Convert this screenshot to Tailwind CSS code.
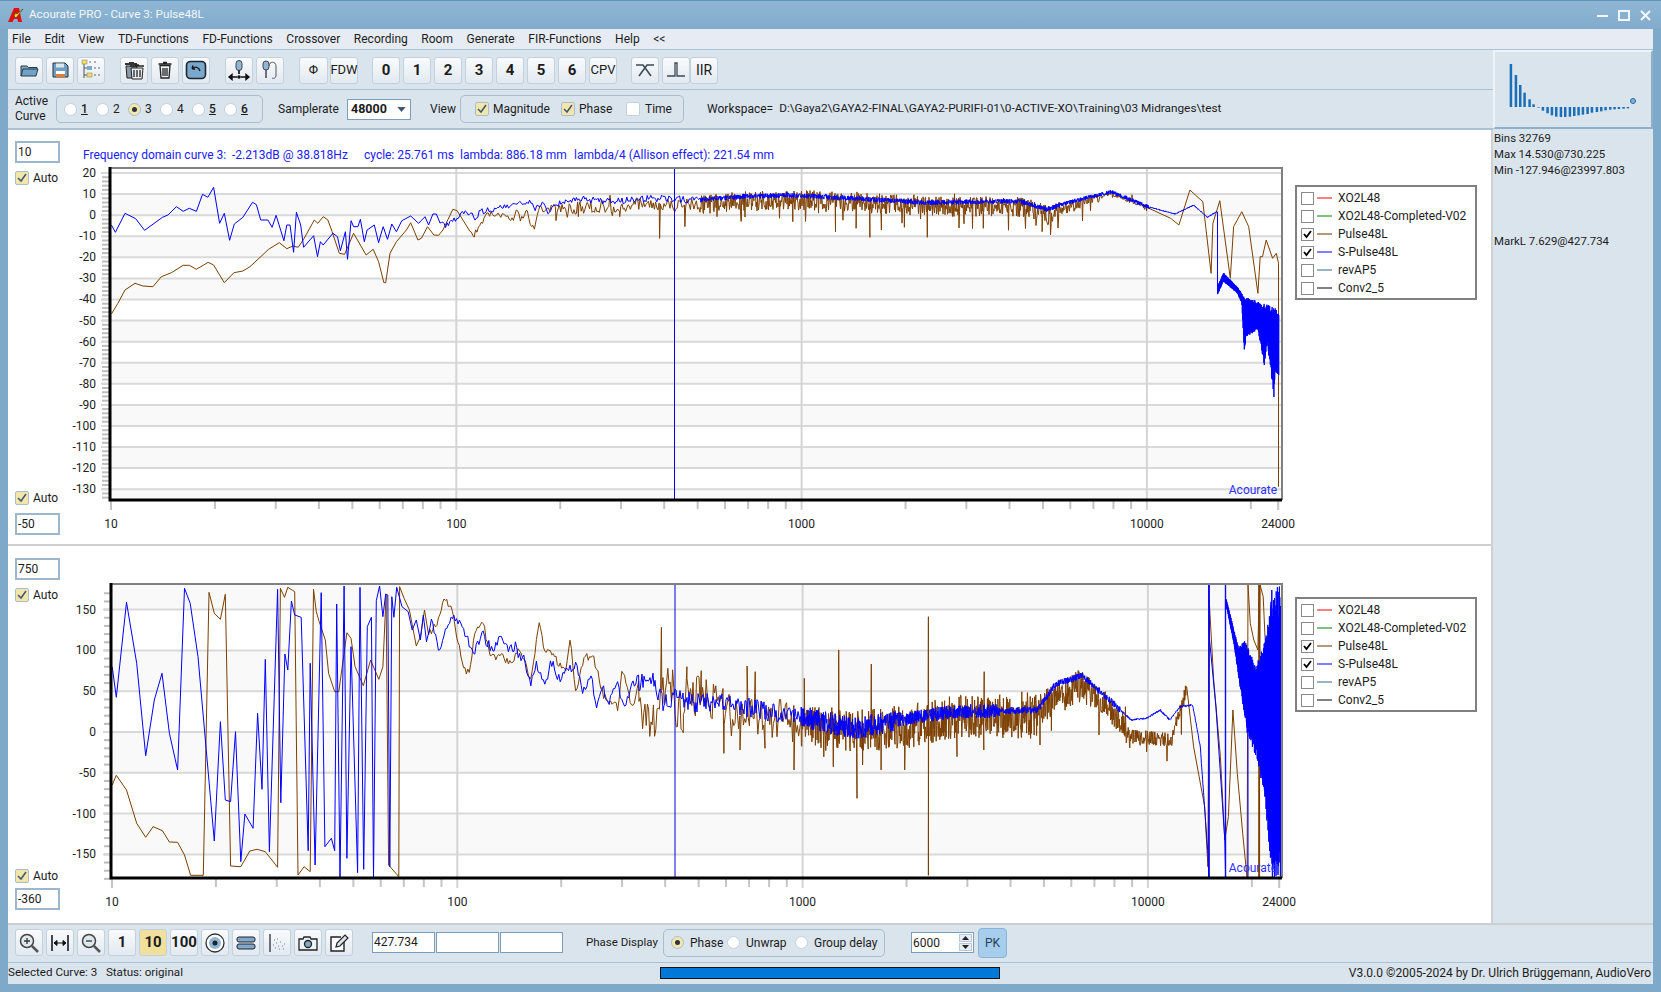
<!DOCTYPE html>
<html lang="en">
<head>
<meta charset="UTF-8">
<title>Acourate PRO - Curve 3: Pulse48L</title>
<script src="https://cdn.jsdelivr.net/npm/@tailwindcss/browser@4"></script>
</head>
<body class="bg-[#7fa9c9]">
<div class="w-[1661px] h-[992px] overflow-hidden flex flex-col bg-[#7fa9c9] font-['Roboto',sans-serif] text-[12px] text-[#1c1c1c] border-t border-[#5f94bc]">

  <!-- title bar -->
  <div class="h-[28px] shrink-0 flex items-center pl-[8px] pr-[10px] bg-linear-to-b from-[#8fb7d4] to-[#82abcd] text-white">
    <svg width="18" height="16" viewBox="0 0 18 16"><path d="M0 15L6 1h5l3 14h-4l-.5-3H6l-1.500 3z" fill="#e01010"/><path d="M6 9l2 2 7-9-6 5-1.500-1z" fill="#f4e21a" stroke="#222" stroke-width=".5"/></svg>
    <span class="ml-[3px] text-[11.7px] text-[#f2f6fa]">Acourate PRO - Curve 3: Pulse48L</span>
    <div class="ml-auto flex items-center gap-[10px]">
      <svg width="11" height="11" viewBox="0 0 11 11"><rect x="0" y="5" width="11" height="2" fill="#f4f7fa"/></svg>
      <svg width="12" height="11" viewBox="0 0 12 11"><rect x="1" y="1" width="10" height="9" fill="none" stroke="#f4f7fa" stroke-width="2"/></svg>
      <svg width="11" height="11" viewBox="0 0 11 11"><path d="M1 1l9 9M10 1l-9 9" stroke="#f4f7fa" stroke-width="2"/></svg>
    </div>
  </div>

  <div class="flex-1 min-h-0 mx-[8px] mb-[8px] flex flex-col">
    <!-- menu -->
    <div class="h-[21px] shrink-0 bg-[#e7ecf4] flex items-center pl-[4px] gap-[13.6px] border-b border-[#a9c2d6]">
      <span>File</span><span>Edit</span><span>View</span><span>TD-Functions</span><span>FD-Functions</span><span>Crossover</span><span>Recording</span><span>Room</span><span>Generate</span><span>FIR-Functions</span><span>Help</span><span>&lt;&lt;</span>
    </div>

    <div class="flex-1 min-h-0 flex">
      <div class="w-[1485px] shrink-0 flex flex-col">
        <!-- toolbar -->
        <div class="h-[40px] shrink-0 bg-[#dae4ed] border-b border-[#a9c2d6] flex items-center pl-[7px] pt-[1px]">
          <div class="flex gap-[3px]">
            <div class="w-[28px] h-[27px] rounded-[3px] border border-[#c3d1de] bg-linear-to-b from-[#f9fbfc] to-[#e2e9f0] flex items-center justify-center">
              <svg width="20" height="20" viewBox="0 0 20 20"><path d="M2 16V6h6l1.500 1.500H18V9" fill="#7fa9c9" stroke="#2b3a45"/><path d="M2 16l2-7h15l-2 7z" fill="#6fa3c9" stroke="#2b3a45"/></svg>
            </div>
            <div class="w-[28px] h-[27px] rounded-[3px] border border-[#c3d1de] bg-linear-to-b from-[#f9fbfc] to-[#e2e9f0] flex items-center justify-center">
              <svg width="20" height="20" viewBox="0 0 20 20"><path d="M3 3h12l3 3v11H3z" fill="#6f9fc3" stroke="#24323c"/><rect x="6" y="3.500" width="8" height="4" fill="#dbe6ee"/><rect x="6" y="11" width="9" height="6" fill="#fff"/><rect x="6" y="14" width="9" height="3" fill="#e87a2c"/></svg>
            </div>
            <div class="w-[28px] h-[27px] rounded-[3px] border border-[#c3d1de] bg-linear-to-b from-[#f9fbfc] to-[#e2e9f0] flex items-center justify-center">
              <svg width="22" height="22" viewBox="0 0 22 22"><path d="M4 3v16M4 9h4M4 16h4" stroke="#555"/><rect x="2" y="1" width="5" height="4" fill="#f3e05a" stroke="#777" stroke-width=".5"/><rect x="7" y="7" width="5" height="4" fill="#7fa9c9"/><rect x="7" y="14" width="5" height="4" fill="#f3e05a" stroke="#777" stroke-width=".5"/><path d="M9 3h3M14 3h3M14 9h3M18 9h2M14 16h3M18 16h2" stroke="#666" stroke-dasharray="2 1"/></svg>
            </div>
          </div>
          <div class="flex gap-[3px] ml-[15px]">
            <div class="w-[28px] h-[27px] rounded-[3px] border border-[#c3d1de] bg-linear-to-b from-[#f9fbfc] to-[#e2e9f0] flex items-center justify-center">
              <svg width="22" height="22" viewBox="0 0 22 22"><path d="M3 7h11l-1 12H4z" fill="#8a9aa6" stroke="#222"/><path d="M2 5h12M6 4h5" stroke="#333" stroke-width="2"/><path d="M8 9h12l-1 11H9z" fill="#e8edf2" stroke="#222"/><path d="M7 7h14M12 6h4M11 11v7M14 11v7M17 11v7" stroke="#222" stroke-width="1.300"/></svg>
            </div>
            <div class="w-[28px] h-[27px] rounded-[3px] border border-[#c3d1de] bg-linear-to-b from-[#f9fbfc] to-[#e2e9f0] flex items-center justify-center">
              <svg width="20" height="20" viewBox="0 0 20 20"><path d="M5 5.500h10l-1 12.500H6z" fill="#eef2f5" stroke="#222" stroke-width="1.300"/><path d="M3.500 4h13M8 2.500h4M8 8v8M10 8v8M12 8v8" stroke="#222" stroke-width="1.300"/></svg>
            </div>
            <div class="w-[28px] h-[27px] rounded-[3px] border border-[#c3d1de] bg-linear-to-b from-[#f9fbfc] to-[#e2e9f0] flex items-center justify-center">
              <svg width="22" height="22" viewBox="0 0 22 22"><rect x="1.500" y="2.500" width="19" height="17" rx="4" fill="#79a8cc" stroke="#1b2730" stroke-width="1.600"/><path d="M7 9.500c3-2.500 7-1.500 8 2.500M7 9.500l1 -3M7 9.500l3 .8" fill="none" stroke="#11181d" stroke-width="1.400"/></svg>
            </div>
          </div>
          <div class="flex gap-[3px] ml-[15px]">
            <div class="w-[28px] h-[27px] rounded-[3px] border border-[#c3d1de] bg-linear-to-b from-[#f9fbfc] to-[#e2e9f0] flex items-center justify-center">
              <svg width="24" height="22" viewBox="0 0 24 22"><rect x="9" y="1.500" width="6" height="10" rx="3" fill="#8fb6d3" stroke="#445"/><path d="M12 11v4" stroke="#333" stroke-width="2"/><path d="M2 18h8M14 18h8M2 18l3-2.500v5zM22 18l-3-2.500v5z" fill="#111" stroke="#111" stroke-width="1.400"/><circle cx="12" cy="18" r="1.800" fill="#111"/></svg>
            </div>
            <div class="w-[28px] h-[27px] rounded-[3px] border border-[#c3d1de] bg-linear-to-b from-[#f9fbfc] to-[#e2e9f0] flex items-center justify-center">
              <svg width="22" height="22" viewBox="0 0 22 22"><rect x="4" y="2" width="6" height="9" rx="3" fill="#8fb6d3" stroke="#445"/><path d="M7 11v8" stroke="#445" stroke-width="1.500"/><path d="M10 7c0-5 7-5 7 0v9c0 3-2 4-4 3" fill="none" stroke="#555"/></svg>
            </div>
          </div>
          <div class="flex gap-[2px] ml-[15px] text-[13px]">
            <div class="w-[29px] h-[27px] rounded-[3px] border border-[#c3d1de] bg-linear-to-b from-[#f9fbfc] to-[#e2e9f0] flex items-center justify-center">Φ</div>
            <div class="w-[28px] h-[27px] rounded-[3px] border border-[#c3d1de] bg-linear-to-b from-[#f9fbfc] to-[#e2e9f0] flex items-center justify-center">FDW</div>
          </div>
          <div class="flex gap-[3px] ml-[14px] text-[15px] font-bold">
            <div class="w-[28px] h-[27px] rounded-[3px] border border-[#c3d1de] bg-linear-to-b from-[#f9fbfc] to-[#e2e9f0] flex items-center justify-center">0</div>
            <div class="w-[28px] h-[27px] rounded-[3px] border border-[#c3d1de] bg-linear-to-b from-[#f9fbfc] to-[#e2e9f0] flex items-center justify-center">1</div>
            <div class="w-[28px] h-[27px] rounded-[3px] border border-[#c3d1de] bg-linear-to-b from-[#f9fbfc] to-[#e2e9f0] flex items-center justify-center">2</div>
            <div class="w-[28px] h-[27px] rounded-[3px] border border-[#c3d1de] bg-linear-to-b from-[#f9fbfc] to-[#e2e9f0] flex items-center justify-center">3</div>
            <div class="w-[28px] h-[27px] rounded-[3px] border border-[#c3d1de] bg-linear-to-b from-[#f9fbfc] to-[#e2e9f0] flex items-center justify-center">4</div>
            <div class="w-[28px] h-[27px] rounded-[3px] border border-[#c3d1de] bg-linear-to-b from-[#f9fbfc] to-[#e2e9f0] flex items-center justify-center">5</div>
            <div class="w-[28px] h-[27px] rounded-[3px] border border-[#c3d1de] bg-linear-to-b from-[#f9fbfc] to-[#e2e9f0] flex items-center justify-center">6</div>
            <div class="w-[28px] h-[27px] rounded-[3px] border border-[#c3d1de] bg-linear-to-b from-[#f9fbfc] to-[#e2e9f0] flex items-center justify-center text-[13px] font-normal">CPV</div>
          </div>
          <div class="flex gap-[3px] ml-[14px] text-[14px]">
            <div class="w-[28px] h-[27px] rounded-[3px] border border-[#c3d1de] bg-linear-to-b from-[#f9fbfc] to-[#e2e9f0] flex items-center justify-center">
              <svg width="22" height="20" viewBox="0 0 22 20"><path d="M2 5h7l8 11M20 5h-7L5 16" fill="none" stroke="#3b4a55" stroke-width="1.600"/></svg>
            </div>
            <div class="w-[28px] h-[27px] rounded-[3px] border border-[#c3d1de] bg-linear-to-b from-[#f9fbfc] to-[#e2e9f0] flex items-center justify-center">
              <svg width="22" height="20" viewBox="0 0 22 20"><path d="M2 16h8V3h2v13h8" fill="none" stroke="#3b4a55" stroke-width="1.300"/></svg>
            </div>
            <div class="w-[28px] h-[27px] rounded-[3px] border border-[#c3d1de] bg-linear-to-b from-[#f9fbfc] to-[#e2e9f0] flex items-center justify-center -ml-[3px]">IIR</div>
          </div>
        </div>

        <!-- active curve row -->
        <div class="h-[40px] shrink-0 bg-[#dae4ed] border-b-2 border-[#a9c2d6] flex items-center pl-[7px]">
          <div class="w-[41px] leading-[15px]">Active<br>Curve</div>
          <div class="w-[207px] h-[28px] rounded-[5px] border border-[#a9bdd0] flex items-center pl-[7px]">
            <label class="w-[32px] flex items-center gap-[4px]"><span class="w-[13px] h-[13px] rounded-full bg-white border border-[#c3d1de]"></span><span class="font-medium underline">1</span></label>
            <label class="w-[32px] flex items-center gap-[4px]"><span class="w-[13px] h-[13px] rounded-full bg-white border border-[#c3d1de]"></span><span>2</span></label>
            <label class="w-[32px] flex items-center gap-[4px]"><span class="w-[13px] h-[13px] rounded-full bg-[#f2e6ab] border border-[#a9bdd0] flex items-center justify-center"><span class="w-[5px] h-[5px] rounded-full bg-[#2b3540]"></span></span><span>3</span></label>
            <label class="w-[32px] flex items-center gap-[4px]"><span class="w-[13px] h-[13px] rounded-full bg-white border border-[#c3d1de]"></span><span>4</span></label>
            <label class="w-[32px] flex items-center gap-[4px]"><span class="w-[13px] h-[13px] rounded-full bg-white border border-[#c3d1de]"></span><span class="font-medium underline">5</span></label>
            <label class="w-[32px] flex items-center gap-[4px]"><span class="w-[13px] h-[13px] rounded-full bg-white border border-[#c3d1de]"></span><span class="font-medium underline">6</span></label>
          </div>
          <span class="ml-[15px] w-[69px]">Samplerate</span>
          <div class="w-[64px] h-[21px] bg-white border border-[#7f9db9] flex items-center pl-[3px] font-bold text-[12.500px]">48000<svg class="ml-auto mr-[4px]" width="9" height="5" viewBox="0 0 10 6"><path d="M0 0h10L5 6z" fill="#3f5870"/></svg></div>
          <span class="ml-[19px] w-[30px]">View</span>
          <div class="w-[224px] h-[28px] rounded-[5px] border border-[#a9bdd0] flex items-center pl-[14px]">
            <span class="w-[14px] h-[14px] rounded-[2px] bg-[#f2e6ab] border border-[#a9bdd0] flex items-center justify-center"><svg width="10" height="10" viewBox="0 0 10 10"><path d="M1 5l3 3 5-7" fill="none" stroke="#3f5870" stroke-width="1.500"/></svg></span>
            <span class="ml-[4px] w-[68px]">Magnitude</span>
            <span class="w-[14px] h-[14px] rounded-[2px] bg-[#f2e6ab] border border-[#a9bdd0] flex items-center justify-center"><svg width="10" height="10" viewBox="0 0 10 10"><path d="M1 5l3 3 5-7" fill="none" stroke="#3f5870" stroke-width="1.500"/></svg></span>
            <span class="ml-[4px] w-[47px]">Phase</span>
            <span class="w-[14px] h-[14px] rounded-[2px] bg-white border border-[#c3d1de]"></span>
            <span class="ml-[5px]">Time</span>
          </div>
          <span class="ml-[23px]">Workspace=</span>
          <span class="ml-[6px] text-[11.800px]">D:\Gaya2\GAYA2-FINAL\GAYA2-PURIFI-01\0-ACTIVE-XO\Training\03 Midranges\test</span>
        </div>

        <!-- magnitude panel -->
        <div class="h-[416px] shrink-0 bg-white flex border-b-2 border-r-2 border-[#d0d0d0]">
          <div class="w-[60px] shrink-0 flex flex-col pl-[7px] pt-[11px] pb-[9px]">
            <div class="w-[45px] h-[22px] bg-white border-2 border-[#9db7cf] px-[1px] leading-[18px]">10</div>
            <div class="mt-[6px] flex items-center gap-[4px]"><span class="w-[14px] h-[14px] rounded-[2px] bg-[#f2e6ab] border border-[#a9bdd0] flex items-center justify-center"><svg width="10" height="10" viewBox="0 0 10 10"><path d="M1 5l3 3 5-7" fill="none" stroke="#3f5870" stroke-width="1.500"/></svg></span>Auto</div>
            <div class="mt-auto flex items-center gap-[4px]"><span class="w-[14px] h-[14px] rounded-[2px] bg-[#f2e6ab] border border-[#a9bdd0] flex items-center justify-center"><svg width="10" height="10" viewBox="0 0 10 10"><path d="M1 5l3 3 5-7" fill="none" stroke="#3f5870" stroke-width="1.500"/></svg></span>Auto</div>
            <div class="mt-[6px] w-[45px] h-[22px] bg-white border-2 border-[#9db7cf] px-[1px] leading-[18px]">-50</div>
          </div>
          <svg id="mag" class="shrink-0 overflow-visible" width="1222" height="414" viewBox="68 130 1222 414"></svg>
          <div class="ml-[5px] mt-[55px] w-[182px] h-[115px] border-2 border-[#808080] pt-[2px] pl-[4px] shrink-0">
            <div class="h-[18px] flex items-center"><span class="w-[13px] h-[13px] border border-[#8a8a8a]"></span><span class="ml-[3px] w-[15px] h-[2px] bg-[#ff8080]"></span><span class="ml-[6px]">XO2L48</span></div>
            <div class="h-[18px] flex items-center"><span class="w-[13px] h-[13px] border border-[#8a8a8a]"></span><span class="ml-[3px] w-[15px] h-[2px] bg-[#80c080]"></span><span class="ml-[6px]">XO2L48-Completed-V02</span></div>
            <div class="h-[18px] flex items-center"><span class="w-[13px] h-[13px] border border-[#8a8a8a] flex items-center justify-center"><svg width="9" height="9" viewBox="0 0 9 9"><path d="M1 4l2.500 3L8 1" fill="none" stroke="#000" stroke-width="1.800"/></svg></span><span class="ml-[3px] w-[15px] h-[2px] bg-[#b39a7a]"></span><span class="ml-[6px]">Pulse48L</span></div>
            <div class="h-[18px] flex items-center"><span class="w-[13px] h-[13px] border border-[#8a8a8a] flex items-center justify-center"><svg width="9" height="9" viewBox="0 0 9 9"><path d="M1 4l2.500 3L8 1" fill="none" stroke="#000" stroke-width="1.800"/></svg></span><span class="ml-[3px] w-[15px] h-[2px] bg-[#8080ff]"></span><span class="ml-[6px]">S-Pulse48L</span></div>
            <div class="h-[18px] flex items-center"><span class="w-[13px] h-[13px] border border-[#8a8a8a]"></span><span class="ml-[3px] w-[15px] h-[2px] bg-[#9ab5c0]"></span><span class="ml-[6px]">revAP5</span></div>
            <div class="h-[18px] flex items-center"><span class="w-[13px] h-[13px] border border-[#8a8a8a]"></span><span class="ml-[3px] w-[15px] h-[2px] bg-[#808080]"></span><span class="ml-[6px]">Conv2_5</span></div>
          </div>
        </div>

        <!-- phase panel -->
        <div class="flex-1 min-h-0 bg-white flex border-r-2 border-[#d0d0d0]">
          <div class="w-[60px] shrink-0 flex flex-col pl-[7px] pt-[12px] pb-[13px]">
            <div class="w-[45px] h-[22px] bg-white border-2 border-[#9db7cf] px-[1px] leading-[18px]">750</div>
            <div class="mt-[6px] flex items-center gap-[4px]"><span class="w-[14px] h-[14px] rounded-[2px] bg-[#f2e6ab] border border-[#a9bdd0] flex items-center justify-center"><svg width="10" height="10" viewBox="0 0 10 10"><path d="M1 5l3 3 5-7" fill="none" stroke="#3f5870" stroke-width="1.500"/></svg></span>Auto</div>
            <div class="mt-auto flex items-center gap-[4px]"><span class="w-[14px] h-[14px] rounded-[2px] bg-[#f2e6ab] border border-[#a9bdd0] flex items-center justify-center"><svg width="10" height="10" viewBox="0 0 10 10"><path d="M1 5l3 3 5-7" fill="none" stroke="#3f5870" stroke-width="1.500"/></svg></span>Auto</div>
            <div class="mt-[3px] w-[45px] h-[22px] bg-white border-2 border-[#9db7cf] px-[1px] leading-[18px]">-360</div>
          </div>
          <svg id="pha" class="shrink-0 overflow-visible" width="1222" height="377" viewBox="68 546 1222 377"></svg>
          <div class="ml-[5px] mt-[51px] w-[182px] h-[115px] border-2 border-[#808080] pt-[2px] pl-[4px] shrink-0">
            <div class="h-[18px] flex items-center"><span class="w-[13px] h-[13px] border border-[#8a8a8a]"></span><span class="ml-[3px] w-[15px] h-[2px] bg-[#ff8080]"></span><span class="ml-[6px]">XO2L48</span></div>
            <div class="h-[18px] flex items-center"><span class="w-[13px] h-[13px] border border-[#8a8a8a]"></span><span class="ml-[3px] w-[15px] h-[2px] bg-[#80c080]"></span><span class="ml-[6px]">XO2L48-Completed-V02</span></div>
            <div class="h-[18px] flex items-center"><span class="w-[13px] h-[13px] border border-[#8a8a8a] flex items-center justify-center"><svg width="9" height="9" viewBox="0 0 9 9"><path d="M1 4l2.500 3L8 1" fill="none" stroke="#000" stroke-width="1.800"/></svg></span><span class="ml-[3px] w-[15px] h-[2px] bg-[#b39a7a]"></span><span class="ml-[6px]">Pulse48L</span></div>
            <div class="h-[18px] flex items-center"><span class="w-[13px] h-[13px] border border-[#8a8a8a] flex items-center justify-center"><svg width="9" height="9" viewBox="0 0 9 9"><path d="M1 4l2.500 3L8 1" fill="none" stroke="#000" stroke-width="1.800"/></svg></span><span class="ml-[3px] w-[15px] h-[2px] bg-[#8080ff]"></span><span class="ml-[6px]">S-Pulse48L</span></div>
            <div class="h-[18px] flex items-center"><span class="w-[13px] h-[13px] border border-[#8a8a8a]"></span><span class="ml-[3px] w-[15px] h-[2px] bg-[#9ab5c0]"></span><span class="ml-[6px]">revAP5</span></div>
            <div class="h-[18px] flex items-center"><span class="w-[13px] h-[13px] border border-[#8a8a8a]"></span><span class="ml-[3px] w-[15px] h-[2px] bg-[#808080]"></span><span class="ml-[6px]">Conv2_5</span></div>
          </div>
        </div>
      </div>

      <!-- right info panel -->
      <div class="flex-1 bg-[#dae4ed] flex flex-col">
        <div class="h-[79px] shrink-0 border-2 border-t-[#eef3f7] border-l-[#eef3f7] border-r-[#8fb0cb] border-b-[#8fb0cb]">
          <svg width="156" height="75" viewBox="0 0 156 75"><g id="thumb" fill="#1a6fb8"></g><circle cx="138" cy="49" r="2.500" fill="#8fb0cb" stroke="#1a6fb8"/></svg>
        </div>
        <div class="pl-[1px] pt-[1px] leading-[16px] text-[11.400px]">
          <div>Bins 32769</div>
          <div>Max 14.530@730.225</div>
          <div>Min -127.946@23997.803</div>
          <div class="mt-[55px]">MarkL 7.629@427.734</div>
        </div>
      </div>
    </div>

    <!-- bottom toolbar -->
    <div class="h-[40px] shrink-0 bg-[#dae4ed] border-t-2 border-[#cfcfcf] border-b border-b-[#a9c2d6] flex items-center pl-[7px] pb-[2px]">
      <div class="flex gap-[3px] text-[15px] font-bold">
        <div class="w-[28px] h-[27px] rounded-[3px] border border-[#c3d1de] bg-linear-to-b from-[#f9fbfc] to-[#e2e9f0] flex items-center justify-center"><svg width="22" height="22" viewBox="0 0 22 22"><circle cx="9" cy="9" r="6.500" fill="#dfe8ef" stroke="#444" stroke-width="1.500"/><path d="M6 9h6M9 6v6" stroke="#333" stroke-width="1.300"/><path d="M14 14l6 6" stroke="#555" stroke-width="2.500"/></svg></div>
        <div class="w-[28px] h-[27px] rounded-[3px] border border-[#c3d1de] bg-linear-to-b from-[#f9fbfc] to-[#e2e9f0] flex items-center justify-center"><svg width="22" height="20" viewBox="0 0 22 20"><path d="M3 2v16M19 2v16" stroke="#445" stroke-width="2"/><path d="M5 10h12M5 10l3-2.500v5zM17 10l-3-2.500v5z" fill="#111" stroke="#111"/></svg></div>
        <div class="w-[28px] h-[27px] rounded-[3px] border border-[#c3d1de] bg-linear-to-b from-[#f9fbfc] to-[#e2e9f0] flex items-center justify-center"><svg width="22" height="22" viewBox="0 0 22 22"><circle cx="9" cy="9" r="6.500" fill="#dfe8ef" stroke="#444" stroke-width="1.500"/><path d="M6 9h6" stroke="#333" stroke-width="1.300"/><path d="M14 14l6 6" stroke="#555" stroke-width="2.500"/></svg></div>
        <div class="w-[28px] h-[27px] rounded-[3px] border border-[#c3d1de] bg-linear-to-b from-[#f9fbfc] to-[#e2e9f0] flex items-center justify-center">1</div>
        <div class="w-[28px] h-[27px] rounded-[3px] border border-[#c3d1de] bg-[#f1e09c] flex items-center justify-center">10</div>
        <div class="w-[28px] h-[27px] rounded-[3px] border border-[#c3d1de] bg-linear-to-b from-[#f9fbfc] to-[#e2e9f0] flex items-center justify-center">100</div>
        <div class="w-[28px] h-[27px] rounded-[3px] border border-[#c3d1de] bg-linear-to-b from-[#f9fbfc] to-[#e2e9f0] flex items-center justify-center"><svg width="22" height="22" viewBox="0 0 22 22"><circle cx="11" cy="11" r="9" fill="#fff" stroke="#333" stroke-width="1.300"/><circle cx="11" cy="11" r="6" fill="#8fb6d3"/><circle cx="11" cy="11" r="2.500" fill="#222"/></svg></div>
        <div class="w-[28px] h-[27px] rounded-[3px] border border-[#c3d1de] bg-linear-to-b from-[#f9fbfc] to-[#e2e9f0] flex items-center justify-center"><svg width="22" height="20" viewBox="0 0 22 20"><rect x="2" y="4" width="18" height="5" rx="2" fill="#7fa9c9" stroke="#223"/><rect x="2" y="11" width="18" height="5" rx="2" fill="#7fa9c9" stroke="#223"/></svg></div>
        <div class="w-[28px] h-[27px] rounded-[3px] border border-[#c3d1de] bg-linear-to-b from-[#f9fbfc] to-[#e2e9f0] flex items-center justify-center"><svg width="22" height="22" viewBox="0 0 22 22"><path d="M4 2v18" stroke="#445" stroke-width="1.500"/><path d="M8 8h1M10 11h1M7 13h1M12 14h1M9 16h1M14 10h1M16 14h1M13 17h1M18 12h1M17 17h1M11 7h1" stroke="#8fa9bf" stroke-width="1.300"/></svg></div>
        <div class="w-[28px] h-[27px] rounded-[3px] border border-[#c3d1de] bg-linear-to-b from-[#f9fbfc] to-[#e2e9f0] flex items-center justify-center"><svg width="22" height="20" viewBox="0 0 22 20"><path d="M2 6h4l1-2h6l1 2h6v11H2z" fill="#eef2f5" stroke="#222" stroke-width="1.300"/><circle cx="11" cy="11" r="3.500" fill="#7fa9c9" stroke="#222" stroke-width="1.300"/></svg></div>
        <div class="w-[28px] h-[27px] rounded-[3px] border border-[#c3d1de] bg-linear-to-b from-[#f9fbfc] to-[#e2e9f0] flex items-center justify-center"><svg width="22" height="22" viewBox="0 0 22 22"><path d="M16 10v9H3V5h10" fill="#fff" stroke="#222" stroke-width="1.400"/><path d="M8 15l1-4 8-8 3 3-8 8z" fill="#d8e3ec" stroke="#222" stroke-width="1.200"/></svg></div>
      </div>
      <div class="ml-[19px] flex gap-[1px]">
        <div class="w-[63px] h-[21px] bg-white border border-[#7f9db9] px-[1px] leading-[18px]">427.734</div>
        <div class="w-[63px] h-[21px] bg-white border border-[#7f9db9]"></div>
        <div class="w-[63px] h-[21px] bg-white border border-[#7f9db9]"></div>
      </div>
      <span class="ml-[23px] w-[77px] text-[11.500px]">Phase Display</span>
      <div class="w-[222px] h-[28px] rounded-[5px] border border-[#a9bdd0] flex items-center pl-[7px]">
        <label class="w-[56px] flex items-center gap-[6px]"><span class="w-[13px] h-[13px] rounded-full bg-[#f2e6ab] border border-[#a9bdd0] flex items-center justify-center"><span class="w-[5px] h-[5px] rounded-full bg-[#2b3540]"></span></span><span>Phase</span></label>
        <label class="w-[68px] flex items-center gap-[6px]"><span class="w-[13px] h-[13px] rounded-full bg-white border border-[#c3d1de]"></span><span>Unwrap</span></label>
        <label class="flex items-center gap-[6px]"><span class="w-[13px] h-[13px] rounded-full bg-white border border-[#c3d1de]"></span><span>Group delay</span></label>
      </div>
      <div class="ml-[26px] w-[63px] h-[21px] bg-white border border-[#7f9db9] flex items-center pl-[1px]">6000
        <div class="ml-auto mr-[1px] w-[13px] h-[17px] flex flex-col gap-[1px]">
          <span class="h-[8px] bg-[#e5ecf2] border border-[#b8c8d6] flex items-center justify-center"><svg width="7" height="4" viewBox="0 0 7 4"><path d="M0 4h7L3.500 0z" fill="#222"/></svg></span>
          <span class="h-[8px] bg-[#e5ecf2] border border-[#b8c8d6] flex items-center justify-center"><svg width="7" height="4" viewBox="0 0 7 4"><path d="M0 0h7L3.500 4z" fill="#222"/></svg></span>
        </div>
      </div>
      <div class="ml-[4px] w-[29px] h-[30px] rounded-[4px] border border-[#88b3d6] bg-[#a7cdec] flex items-center justify-center text-[#24425c]">PK</div>
    </div>

    <!-- status bar -->
    <div class="h-[21px] shrink-0 bg-[#dae4ed] flex items-center pb-[2px] pr-[2px]">
      <span class="w-[652px] shrink-0 text-[11.600px]">Selected Curve: 3 &nbsp; Status: original</span>
      <div class="w-[340px] h-[12px] bg-[#0078d7] border border-[#111]"></div>
      <span class="ml-auto">V3.0.0 ©2005-2024 by Dr. Ulrich Brüggemann, AudioVero</span>
    </div>
  </div>
</div>

<script>
  // seeded generator so the noisy curves come out the same every time
  function rng(a) {
    return function () {
      a |= 0; a = a + 0x6D2B79F5 | 0;
      let t = Math.imul(a ^ a >>> 15, 1 | a);
      t = t + Math.imul(t ^ t >>> 7, 61 | t) ^ t;
      return ((t ^ t >>> 14) >>> 0) / 4294967296;
    };
  }
  const toPath = pts => 'M' + pts.map(p => p[0].toFixed(1) + ' ' + p[1].toFixed(1)).join('L');
  function lin(base, x) {
    for (let i = 1; i < base.length; i++) {
      if (x <= base[i][0]) {
        const a = base[i - 1], b = base[i];
        return a[1] + (b[1] - a[1]) * (x - a[0]) / Math.max(b[0] - a[0], 0.01);
      }
    }
    return base[base.length - 1][1];
  }
  function noisy(base, x0, x1, o) {
    const out = [], spikes = (o.spikes || []).slice().sort((p, q) => p[0] - q[0]);
    let si = 0;
    for (let x = x0; x < x1; x += o.step(x)) {
      while (si < spikes.length && spikes[si][0] <= x) out.push(spikes[si++]);
      let y = lin(base, x) + (o.r() - (o.bias || .5)) * o.amp(x);
      if (o.r() < (o.p || 0)) y += (o.r() - .3) * o.size;
      out.push([x, y]);
    }
    return out;
  }
  function wedge(top, bot, x0, x1, r) {
    const out = [];
    let i = 0;
    for (let x = x0; x < x1; x += .2) {
      const t = lin(top, x), b = lin(bot, x), d = b - t;
      out.push([x, i++ % 2 ? t + r() * .12 * d : b - r() * .12 * d]);
    }
    return out;
  }
  // keeps the traced corners up to x, then carries on with finer wiggle over the same line
  const wiggly = (low, from, to, amp, r) => low.filter(p => p[0] < from).concat(noisy(low, from, to, { r: r, step: () => 1.4, amp: () => amp }));
  const zoomed = (sx, ox, oy) => list => list.map(p => [ox + p[0] / sx, oy + p[1] / 3]);

  function drawChart(c) {
    let s = `<defs><clipPath id="${c.id}c"><rect x="${c.x0}" y="${c.top}" width="${c.x1 - c.x0}" height="${c.bot - c.top}"/></clipPath></defs>`;
    c.bands.forEach(b => s += `<rect x="${c.x0}" y="${b[0]}" width="${c.x1 - c.x0}" height="${b[1] - b[0]}" fill="#f9f9f9"/>`);
    c.minorY.forEach(y => s += `<path d="M${c.tickX} ${y}H${c.x0}" stroke="#bdbdbd" stroke-width="2"/>`);
    c.labelsY.forEach(l => {
      s += `<path d="M${c.tickX - 1} ${l[1]}H${c.x1}" stroke="#d9d9d9" stroke-width="2"/>`;
      s += `<text x="96" y="${l[1] + 4}" text-anchor="end" fill="#222" font-size="12">${l[0]}</text>`;
    });
    [100, 1000, 10000].forEach(f => {
      const x = c.fx(f);
      s += `<path d="M${x} ${c.top}V${c.bot + 10}" stroke="#d4d4d4" stroke-width="2"/>`;
    });
    [10, 100, 1000, 10000].forEach(d => [2, 3, 4, 5, 6, 7, 8, 9].forEach(m => {
      if (d * m <= 24000) s += `<path d="M${c.fx(d * m)} ${c.bot}v9" stroke="#c4c4c4" stroke-width="2"/>`;
    }));
    s += `<path d="M${c.fx(10)} ${c.bot}v10M${c.fx(24000)} ${c.bot}v10" stroke="#c4c4c4" stroke-width="2"/>`;
    s += `<g clip-path="url(#${c.id}c)" fill="none">`;
    c.brown.forEach(p => s += `<path d="${toPath(p)}" stroke="#7c3f00" stroke-width="1" stroke-linejoin="round"/>`);
    s += `<path d="M${c.mark} ${c.top}V${c.bot}" stroke="#0000e0" stroke-width="1"/>`;
    c.blue.forEach(p => s += `<path d="${toPath(p)}" stroke="#0000ff" stroke-width="1" stroke-linejoin="round"/>`);
    s += '</g>';
    s += `<path d="M${c.x0 - 1} ${c.top - 1}H${c.x1 + 1}V${c.bot}" fill="none" stroke="#808080" stroke-width="2"/>`;
    s += `<path d="M${c.x0 - 1} ${c.top - 2}V${c.bot}H${c.x1 + 1}" fill="none" stroke="#000" stroke-width="3"/>`;
    [[10, c.fx(10)], [100, c.fx(100)], [1000, c.fx(1000)], [10000, c.fx(10000)], [24000, c.fx(24000)]].forEach(l => {
      s += `<text x="${l[1]}" y="${c.labelX}" text-anchor="middle" fill="#222" font-size="12">${l[0]}</text>`;
    });
    s += `<text x="1277" y="${c.bot - 6}" text-anchor="end" fill="#3030ff" font-size="12">Acourate</text>`;
    if (c.caption) s += `<text y="159" fill="#2020ff" font-size="12">` + c.caption.map(t => `<tspan x="${t[0]}">${t[1]}</tspan>`).join('') + '</text>';
    document.getElementById(c.id).innerHTML = s;
  }

  // magnitude curves, traced from the plot
  const m5 = zoomed(2.8, 0, 130), m6 = zoomed(2.178, 560, 130);
  const magY = v => 173 + (20 - v) * 2.108;
  const magBlueLow = m5([[312,285],[323,307],[350,250],[380,266],[405,301],[455,262],[470,255],[494,230],[513,244],[530,235],[550,244],[567,193],[582,202],[598,172],[615,280],[628,250],[643,331],[656,282],[680,262],[707,217],[718,224],[730,270],[750,270],[762,292],[773,256],[795,332],[803,285],[812,285],[822,367],[830,247],[842,285],[850,352],[878,317],[889,380],[897,335],[905,345],[932,310],[945,320],[953,362],[967,305],[973,388],[983,272],[990,290],[1002,290],[1009,268],[1020,335],[1028,300],[1048,285],[1060,338],[1066,315],[1073,290],[1085,328],[1097,282],[1110,305],[1125,272],[1150,258],[1172,280],[1190,260],[1200,285],[1212,252],[1222,252],[1243,290],[1260,275],[1277,265],[1305,240],[1330,265],[1345,245],[1378,238],[1410,230],[1440,225],[1480,212],[1500,235],[1520,215],[1535,245],[1560,215]]);
  const magBrownLow = m5([[312,552],[330,520],[350,480],[378,460],[400,468],[428,470],[452,440],[480,428],[513,406],[530,406],[550,418],[583,397],[598,405],[628,458],[655,428],[680,423],[700,410],[752,358],[782,338],[803,356],[820,348],[835,352],[850,328],[880,270],[890,280],[905,260],[918,270],[930,305],[950,370],[965,373],[990,310],[1025,375],[1045,358],[1060,395],[1075,458],[1080,458],[1092,370],[1110,335],[1138,300],[1150,278],[1170,330],[1180,325],[1197,290],[1215,315],[1228,316],[1240,300],[1268,238],[1280,242],[1327,315],[1365,252],[1400,255],[1420,258],[1435,270],[1447,240],[1458,268],[1475,240],[1485,278],[1498,292],[1510,230],[1530,242],[1555,225]]);
  const magBlueBase = m6([[-10,225],[40,205],[100,215],[200,205],[300,210],[400,200],[500,195],[640,205],[800,218],[1000,213],[1060,238],[1100,220],[1200,185],[1280,230],[1340,252],[1380,225],[1410,262],[1430,245]]);
  const magBrownBase = m6([[-10,235],[100,225],[200,218],[300,218],[400,210],[500,205],[640,210],[800,225],[1000,225],[1060,250],[1100,235],[1200,190],[1280,232]]);
  const magBrownSpikes = m6([[16,262],[40,260],[130,260],[217,325],[272,290],[395,272],[507,275],[600,305],[645,295],[675,322],[700,300],[750,292],[800,322],[922,295],[1050,305]]);

  const magBrown = wiggly(magBrownLow, 470, 556, 6, rng(41)).concat(noisy(magBrownBase, 556, 1147, {
    r: rng(7), step: x => x < 700 ? 1.2 : .5, bias: .42,
    amp: x => x < 700 ? 13 : x < 1060 ? 20 : x < 1100 ? 10 : 4,
    p: .07, size: 26, spikes: magBrownSpikes
  })).concat(m6([[1278,232],[1330,265],[1348,285],[1372,180],[1400,215],[1418,430],[1422,280],[1437,212],[1460,445],[1467,290],[1485,245],[1500,290],[1520,490],[1525,380],[1530,380],[1538,330],[1552,385],[1560,370],[1565,400],[1565,1070]]));
  const magBlue = wiggly(magBlueLow, 440, 556, 6, rng(43)).concat(noisy(magBlueBase, 556, 1217, {
    r: rng(11), step: x => x < 700 ? 1.2 : x < 1000 ? .3 : .25,
    amp: x => x < 700 ? 7 : x < 1060 ? 5 : x < 1150 ? 4 : 1
  }));
  const magTop = m6([[1432,470],[1445,428],[1475,470],[1490,500],[1565,535]]);
  const magBot = m6([[1432,495],[1445,455],[1475,490],[1485,520],[1490,670],[1495,620],[1520,600],[1534,710],[1540,640],[1555,805],[1558,720],[1566,760]]);

  drawChart({
    id: 'mag', x0: 111, x1: 1281, top: 169, bot: 500, mark: 674.5, tickX: 102, labelX: 528,
    fx: f => 111 + Math.log10(f / 10) * 345.3,
    bands: [[magY(10), magY(0)], [magY(-10), magY(-20)], [magY(-30), magY(-40)], [magY(-50), magY(-60)], [magY(-70), magY(-80)], [magY(-90), magY(-100)], [magY(-110), magY(-120)], [magY(-130), 500]],
    minorY: Array.from({ length: 80 }, (_, i) => magY(20 - i * 2)).filter(y => y < 499),
    labelsY: Array.from({ length: 16 }, (_, i) => [20 - i * 10, magY(20 - i * 10)]),
    brown: [magBrown],
    blue: [magBlue, m6([[1432,245],[1432,490]]), wedge(magTop, magBot, 1217.5, 1279, rng(3))],
    caption: [[83, 'Frequency domain curve 3:'], [232, '-2.213dB @ 38.818Hz'], [364, 'cycle: 25.761 ms'], [460, 'lambda: 886.18 mm'], [574, 'lambda/4 (Allison effect): 221.54 mm']]
  });

  // phase curves
  const p7 = zoomed(2.45, 0, 540), p8 = zoomed(2.24, 640, 540);
  const phaY = v => 732 - v * .816;
  const phaBlueLow = p7([[275,380],[285,472],[310,187],[335,370],[357,647],[378,480],[397,400],[415,580],[435,690],[452,145],[466,190],[485,350],[505,625],[525,903],[540,545],[552,780],[565,785],[577,575],[590,965],[600,822],[620,865],[631,520],[642,748],[650,358],[660,935],[680,148],[688,788],[698,342],[705,390],[714,183],[722,225],[738,232],[755,932],[760,370],[772,975],[787,158],[796,920],[812,895],[820,932],[825,192],[833,1016],[843,138],[850,955],[860,320],[876,998],[882,142],[891,988],[900,260],[910,232],[915,1016],[922,182],[930,138],[938,230],[945,162],[950,165],[955,980],[960,170],[965,232],[972,142],[985,200],[1000,215],[1010,270],[1020,240],[1030,300],[1037,225],[1045,305],[1058,232],[1066,290],[1075,340],[1090,268],[1102,240],[1118,240],[1130,260],[1145,290],[1152,320],[1160,350],[1170,310],[1180,280],[1195,310],[1210,330],[1218,310],[1228,298],[1238,320],[1245,330],[1262,318],[1272,345],[1285,355],[1295,410],[1300,425],[1315,370],[1325,410],[1335,440],[1345,390],[1352,365],[1365,405],[1375,430],[1385,380],[1398,385],[1410,370],[1420,420],[1428,455],[1440,430],[1450,420],[1462,500],[1475,430],[1490,490],[1502,450],[1512,420],[1520,480],[1530,510],[1545,440],[1560,420]]);
  const phaBrownLow = p7([[275,735],[285,706],[310,750],[335,850],[357,892],[375,860],[398,872],[415,906],[435,907],[452,945],[467,1006],[498,1006],[512,157],[525,220],[540,238],[552,163],[565,978],[590,980],[612,933],[630,928],[650,935],[680,982],[687,145],[697,172],[705,142],[722,155],[730,1005],[745,980],[760,995],[768,148],[775,215],[782,245],[797,300],[805,400],[820,455],[830,455],[850,278],[860,295],[870,380],[890,437],[908,360],[928,418],[938,380],[946,165],[952,975],[977,1010],[979,140],[990,175],[1003,210],[1020,318],[1030,290],[1040,210],[1050,285],[1070,255],[1090,170],[1108,215],[1115,270],[1125,320],[1140,398],[1150,400],[1165,265],[1185,250],[1200,350],[1225,350],[1250,365],[1275,330],[1300,420],[1320,250],[1335,340],[1350,335],[1385,400],[1397,295],[1410,455],[1435,345],[1455,360],[1480,470],[1515,505],[1523,385],[1550,505],[1565,410]]);
  const phaBlueBase = p8([[-10,455],[22,395],[50,490],[80,470],[120,490],[200,490],[300,520],[360,530],[480,565],[620,530],[700,515],[890,510],[930,435],[990,405],[1060,490],[1100,540],[1135,535],[1165,510],[1187,540],[1210,500],[1238,495],[1255,620],[1272,940]]);
  const phaBrownBase = p8([[-10,470],[15,545],[38,550],[48,440],[60,430],[97,550],[105,460],[200,510],[300,540],[400,560],[500,575],[600,560],[700,530],[880,530],[930,470],[985,440],[1050,500],[1100,590],[1190,600],[1225,445]]);
  const phaBrownSpikes = p8([[48,262],[97,578],[105,380],[137,392],[188,640],[224,630],[240,378],[258,395],[280,625],[345,690],[368,415],[433,680],[445,330],[486,775],[518,372],[540,690],[593,690],[646,230],[646,1006],[710,650],[770,630],[771,395],[896,615]]);

  const phaBrown = wiggly(phaBrownLow, 430, 639, 8, rng(45)).concat(noisy(phaBrownBase, 639, 1187, {
    r: rng(21), step: x => x < 800 ? 1.2 : .4, bias: .5,
    amp: x => x < 900 ? 44 : x < 1040 ? 44 : x < 1090 ? 32 : x < 1130 ? 26 : 15,
    p: .05, size: 40, spikes: phaBrownSpikes
  })).concat(p8([[1225,445],[1240,620],[1265,800],[1272,980],[1275,180],[1285,420],[1300,650],[1310,900],[1318,830],[1328,510],[1338,700],[1350,880],[1360,1016],[1362,135],[1367,250],[1375,300],[1384,330],[1387,135],[1387,1016],[1389,135],[1396,170],[1400,290],[1410,400],[1412,580]]));
  const phaBlue = wiggly(phaBlueLow, 430, 639, 10, rng(47)).concat(noisy(phaBlueBase, 639, 1208, {
    r: rng(31), step: x => x < 800 ? 1 : .3,
    amp: x => x < 800 ? 20 : x < 900 ? 22 : x < 1000 ? 14 : x < 1120 ? 7 : 2
  })).concat(p8([[1274,1016],[1274,135],[1276,300],[1290,500],[1300,700],[1310,900],[1312,1016],[1312,135]]));
  const phaTop = p8([[1312,170],[1340,320],[1355,300],[1380,380],[1400,300],[1415,150],[1436,135]]);
  const phaBot = p8([[1312,190],[1330,310],[1345,450],[1360,580],[1380,650],[1400,780],[1415,1016],[1436,1016]]);

  drawChart({
    id: 'pha', x0: 112, x1: 1281, top: 585, bot: 878, mark: 675, tickX: 104, labelX: 906,
    fx: f => 112 + Math.log10(f / 10) * 345.3,
    bands: [[585, phaY(150)], [phaY(100), phaY(50)], [phaY(0), phaY(-50)], [phaY(-100), phaY(-150)]],
    minorY: Array.from({ length: 36 }, (_, i) => phaY(170 - i * 10)),
    labelsY: [150, 100, 50, 0, -50, -100, -150].map(v => [v, phaY(v)]),
    brown: [phaBrown, p8([[1274,135],[1274,1016]]), p8([[1386,135],[1386,1016]]), p8([[1388,135],[1388,1016]])],
    blue: [phaBlue, p8([[1275,135],[1275,1016]]), p8([[1311,135],[1311,1016]]), p8([[1362,570],[1362,1016]]), wedge(phaTop, phaBot, 1226, 1281, rng(5))]
  });

  // thumbnail of the level curve in the info panel
  const thumb = [[47,42],[62,75],[75,105],[88,128],[103,148],[115,163],[130,172],[143,182],[157,190],[170,196],[183,200],[197,201],[210,201],[224,200],[237,198],[250,196],[263,194],[277,192],[290,188],[305,186],[318,184],[331,181],[345,179],[358,178],[371,177],[385,176],[398,175]];
  document.getElementById('thumb').innerHTML = thumb.map(b => {
    const x = b[0] / 3 - 1, yb = 55, y = b[1] / 3 - 2;
    return `<rect x="${x}" y="${Math.min(y, yb)}" width="2.500" height="${Math.max(Math.abs(y - yb), .6)}"/>`;
  }).join('');
</script>
</body>
</html>
